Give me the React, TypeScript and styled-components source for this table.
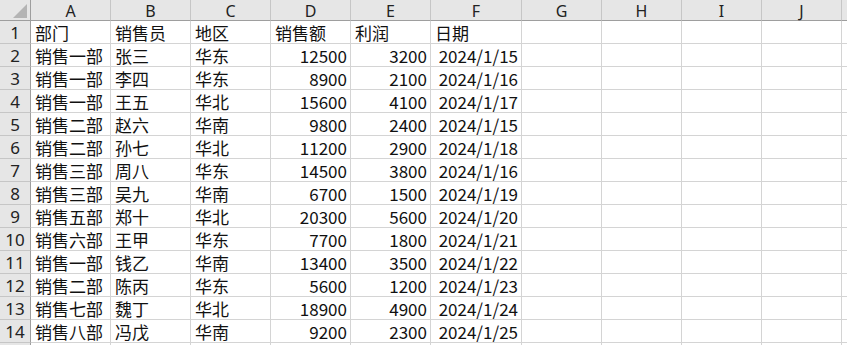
import React from "react";
import styled, { createGlobalStyle } from "styled-components";

const Global = createGlobalStyle`
  html, body { margin: 0; padding: 0; background: #ffffff; overflow: hidden; }
  body { font-family: "Noto Sans CJK SC", "Noto Sans", sans-serif; }
`;

const COLS = ["A", "B", "C", "D", "E", "F", "G", "H", "I", "J", ""];

const rows: [string, string, string, number, number, string][] = [
  ["销售一部", "张三", "华东", 12500, 3200, "2024/1/15"],
  ["销售一部", "李四", "华东", 8900, 2100, "2024/1/16"],
  ["销售一部", "王五", "华北", 15600, 4100, "2024/1/17"],
  ["销售二部", "赵六", "华南", 9800, 2400, "2024/1/15"],
  ["销售二部", "孙七", "华北", 11200, 2900, "2024/1/18"],
  ["销售三部", "周八", "华东", 14500, 3800, "2024/1/16"],
  ["销售三部", "吴九", "华南", 6700, 1500, "2024/1/19"],
  ["销售五部", "郑十", "华北", 20300, 5600, "2024/1/20"],
  ["销售六部", "王甲", "华东", 7700, 1800, "2024/1/21"],
  ["销售一部", "钱乙", "华南", 13400, 3500, "2024/1/22"],
  ["销售二部", "陈丙", "华东", 5600, 1200, "2024/1/23"],
  ["销售七部", "魏丁", "华北", 18900, 4900, "2024/1/24"],
  ["销售八部", "冯戊", "华南", 9200, 2300, "2024/1/25"],
];

const Sheet = styled.div`
  display: grid;
  grid-template-columns: 31px 80px 80px 80px 80px 80px 91px 80px 80px 80px 80px 40px;
  grid-auto-rows: 23px;
  grid-template-rows: 21px;
  width: 847px;
  height: 345px;
  overflow: hidden;
`;

const Corner = styled.div`
  position: relative;
  background: #e6e6e6;
  border-right: 1px solid #9e9e9e;
  border-bottom: 1px solid #9e9e9e;
  box-sizing: border-box;
`;

const Triangle = styled.div`
  position: absolute;
  right: 3px;
  bottom: 2px;
  width: 0;
  height: 0;
  border-left: 14px solid transparent;
  border-bottom: 14px solid #b4b4b4;
`;

const ColHead = styled.div`
  display: flex;
  align-items: center;
  justify-content: center;
  background: #e6e6e6;
  border-right: 1px solid #c6c6c6;
  border-bottom: 1px solid #9e9e9e;
  box-sizing: border-box;
  font-family: "Noto Sans", "Open Sans", sans-serif;
  font-size: 16px;
  color: #222;
  line-height: 1;
  padding-top: 1px;
`;

const RowHead = styled.div`
  display: flex;
  align-items: center;
  justify-content: center;
  background: #e6e6e6;
  border-right: 1px solid #9e9e9e;
  border-bottom: 1px solid #c6c6c6;
  box-sizing: border-box;
  font-family: "Noto Sans", sans-serif;
  font-size: 17px;
  color: #222;
  line-height: 1;
`;

const Cell = styled.div<{ $right?: boolean }>`
  display: flex;
  align-items: center;
  justify-content: ${(p) => (p.$right ? "flex-end" : "flex-start")};
  padding: ${(p) => (p.$right ? "1px 3px 0 0" : "1px 0 0 4px")};
  border-right: 1px solid #d4d4d4;
  border-bottom: 1px solid #d4d4d4;
  box-sizing: border-box;
  font-family: "Noto Sans CJK SC", "Noto Sans", sans-serif;
  font-size: 17px;
  color: #111;
  white-space: nowrap;
  overflow: visible;
  line-height: 1;
`;

const header = ["部门", "销售员", "地区", "销售额", "利润", "日期"];

export default function App() {
  const allRows: (string | number)[][] = [header, ...rows];
  return (
    <>
      <Global />
      <Sheet>
        <Corner>
          <Triangle />
        </Corner>
        {COLS.map((c, i) => (
          <ColHead key={i}>{c}</ColHead>
        ))}
        {[...allRows, ["", "", "", "", "", ""]].map((r, ri) => (
          <React.Fragment key={ri}>
            <RowHead>{ri < allRows.length ? ri + 1 : ""}</RowHead>
            {r.map((v, ci) => (
              <Cell key={ci} $right={typeof v === "number" || (ri > 0 && ci === 5 && v !== "")}>
                {v}
              </Cell>
            ))}
            {[0, 1, 2, 3, 4].map((k) => (
              <Cell key={"e" + k} />
            ))}
          </React.Fragment>
        ))}
      </Sheet>
    </>
  );
}
